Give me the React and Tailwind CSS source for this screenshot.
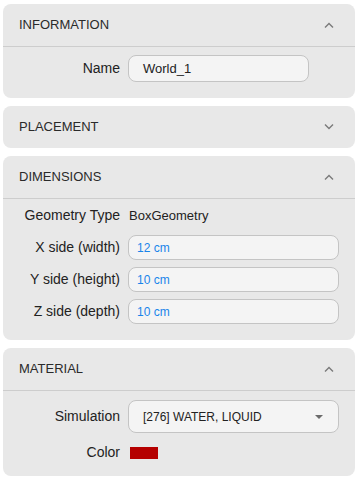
import React from 'react';

const Chevron = ({ up }) => (
  <svg width="10" height="6" viewBox="0 0 10 6" className="text-[#7a7a7a]">
    {up ? (
      <polyline points="1,5.5 5,1.5 9,5.5" fill="none" stroke="currentColor" strokeWidth="1.4" />
    ) : (
      <polyline points="1,0.5 5,4.5 9,0.5" fill="none" stroke="currentColor" strokeWidth="1.4" />
    )}
  </svg>
);

const Panel = ({ title, open, children }) => (
  <div className="rounded-lg bg-[#e8e8e8]">
    <div
      className={`flex items-center justify-between pl-4 pr-[21px] text-[13px] text-[#2a2a2a] ${open ? 'h-[43px] border-b border-[#cdcdcd]' : 'h-[42px]'}`}
    >
      <span>{title}</span>
      <Chevron up={open} />
    </div>
    {open && children}
  </div>
);

const Row = ({ label, children, h = 'h-[25px]' }) => (
  <div className={`grid grid-cols-[117px_1fr] gap-x-2 items-center pr-4 ${h}`}>
    <div className="text-right text-[14px] text-[#222]">{label}</div>
    <div className="flex items-center">{children}</div>
  </div>
);

const Field = ({ value }) => (
  <div className="w-full h-[25px] rounded-lg border border-[#c4c4c4] bg-[#f4f4f4] flex items-center pl-[8px] text-[12px] text-[#1a84ea]">
    {value}
  </div>
);

export default function App() {
  return (
    <div
      className="min-h-screen bg-white pt-1 pl-[3px] pr-[4px] flex flex-col gap-2"
      style={{ fontFamily: '"Liberation Sans", Arial, sans-serif' }}
    >
      <Panel title="INFORMATION" open>
        <div className="pt-2 pb-4">
          <Row label="Name" h="h-[27px]">
            <div className="w-[181px] h-[27px] rounded-lg border border-[#c4c4c4] bg-[#f4f4f4] flex items-center pl-[14px] text-[13px] text-[#222]">
              World_1
            </div>
          </Row>
        </div>
      </Panel>

      <Panel title="PLACEMENT" />

      <Panel title="DIMENSIONS" open>
        <div className="pt-1 pb-4 flex flex-col gap-[7px]">
          <Row label="Geometry Type">
            <span className="pl-px text-[13px] text-[#222]">BoxGeometry</span>
          </Row>
          <Row label="X side (width)">
            <Field value="12 cm" />
          </Row>
          <Row label="Y side (height)">
            <Field value="10 cm" />
          </Row>
          <Row label="Z side (depth)">
            <Field value="10 cm" />
          </Row>
        </div>
      </Panel>

      <Panel title="MATERIAL" open>
        <div className="pt-[9px] pb-[11px] flex flex-col gap-[7px]">
          <Row label="Simulation" h="h-[33px]">
            <div className="w-full h-[33px] rounded-lg border border-[#c4c4c4] bg-[#f4f4f4] flex items-center justify-between pl-[14px] pr-[15px] text-[12px] text-[#222]">
              <span>[276] WATER, LIQUID</span>
              <svg width="8" height="4" viewBox="0 0 8 4">
                <polygon points="0,0 8,0 4,4" fill="#6b6b6b" />
              </svg>
            </div>
          </Row>
          <Row label="Color">
            <div className="ml-[2px] w-[28px] h-[12px] bg-[#b50000]" />
          </Row>
        </div>
      </Panel>
    </div>
  );
}
